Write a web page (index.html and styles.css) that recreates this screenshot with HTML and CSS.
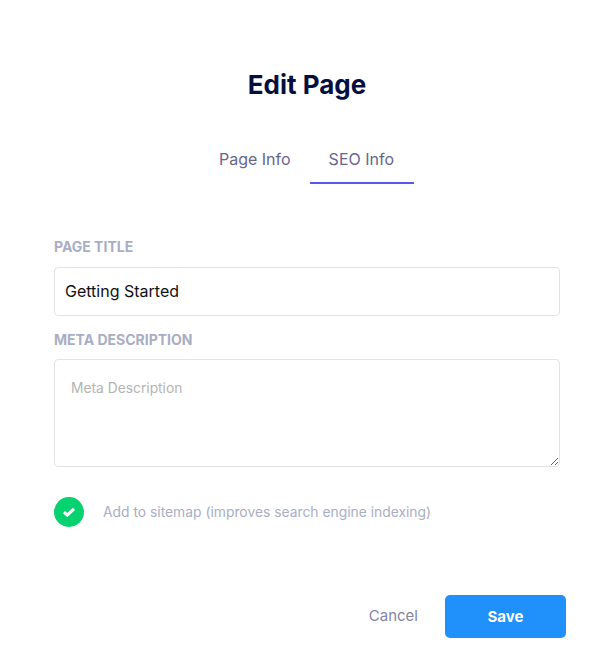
FILE: index.html
```html
<!DOCTYPE html>
<html>
<head>
	<meta charset="UTF-8">
	<title>Edit Page</title>
	<link rel="stylesheet" href="styles.css">
</head>
<body>
	<div class="modal">
		<h1 class="modal-title">Edit Page</h1>

		<div class="tabs">
			<a class="tab">Page Info</a>
			<a class="tab active">SEO Info</a>
		</div>

		<form class="fields">
			<label class="field-label">PAGE TITLE</label>
			<input class="text-input" type="text" value="Getting Started">

			<label class="field-label meta-label">META DESCRIPTION</label>
			<textarea class="text-area" placeholder="Meta Description"></textarea>

			<div class="sitemap-row">
				<span class="check">
					<svg width="14" height="14" viewBox="0 0 14 14"><path d="M2 7.2 L5.3 10.2 L12 3.8" fill="none" stroke="#fff" stroke-width="3"/></svg>
				</span>
				<span class="sitemap-text">Add to sitemap (improves search engine indexing)</span>
			</div>
		</form>

		<div class="actions">
			<a class="cancel">Cancel</a>
			<button class="save" type="button">Save</button>
		</div>
	</div>
</body>
</html>
```

FILE: styles.css
```css
* {
	box-sizing: border-box;
}

html, body {
	margin: 0;
	padding: 0;
	height: 100%;
	background: #fff;
	font-family: Inter, "Liberation Sans", sans-serif;
}

.modal {
	padding: 70px 53px 0 54px;
}

.modal-title {
	margin: 0;
	font-size: 26px;
	line-height: 30px;
	font-weight: 700;
	text-align: center;
	color: #050f3f;
}

.tabs {
	display: flex;
	justify-content: center;
	margin-top: 42px;
}

.tab {
	padding: 0 19px;
	height: 42px;
	line-height: 34px;
	font-size: 16px;
	color: #66668c;
	border-bottom: 2px solid transparent;
}

.tab.active {
	padding-right: 20px;
	border-bottom-color: #5a55f5;
}

.fields {
	display: flex;
	flex-direction: column;
	margin-top: 54px;
}

.field-label {
	font-size: 14px;
	line-height: 18px;
	font-weight: 700;
	color: #a9aec3;
}

.text-input {
	margin-top: 11px;
	height: 49px;
	padding: 0 10px 2px;
	border: 1px solid #e1e3e6;
	border-radius: 4px;
	font-family: inherit;
	font-size: 16px;
	color: #111;
}

.meta-label {
	margin-top: 15px;
}

.text-area {
	display: block;
	margin-top: 10px;
	height: 108px;
	padding: 20px 16px;
	border: 1px solid #e1e3e6;
	border-radius: 4px;
	font-family: inherit;
	font-size: 13.8px;
}

.text-area::placeholder {
	color: #b4b4b4;
}

.sitemap-row {
	display: flex;
	align-items: center;
	gap: 19px;
	margin-top: 30px;
}

.check {
	display: flex;
	align-items: center;
	justify-content: center;
	width: 30px;
	height: 30px;
	border-radius: 50%;
	background: #06d26f;
}

.sitemap-text {
	padding-bottom: 1px;
	font-size: 13.85px;
	color: #a9aec3;
}

.actions {
	display: flex;
	justify-content: flex-end;
	align-items: center;
	gap: 27px;
	margin-top: 68px;
	margin-right: -6px;
}

.cancel {
	margin-bottom: 2px;
	font-size: 15px;
	color: #85859f;
}

.save {
	width: 121px;
	height: 43px;
	border: 0;
	border-radius: 5px;
	background: #2090fb;
	color: #fff;
	font-family: inherit;
	font-size: 15px;
	font-weight: 700;
}
```
